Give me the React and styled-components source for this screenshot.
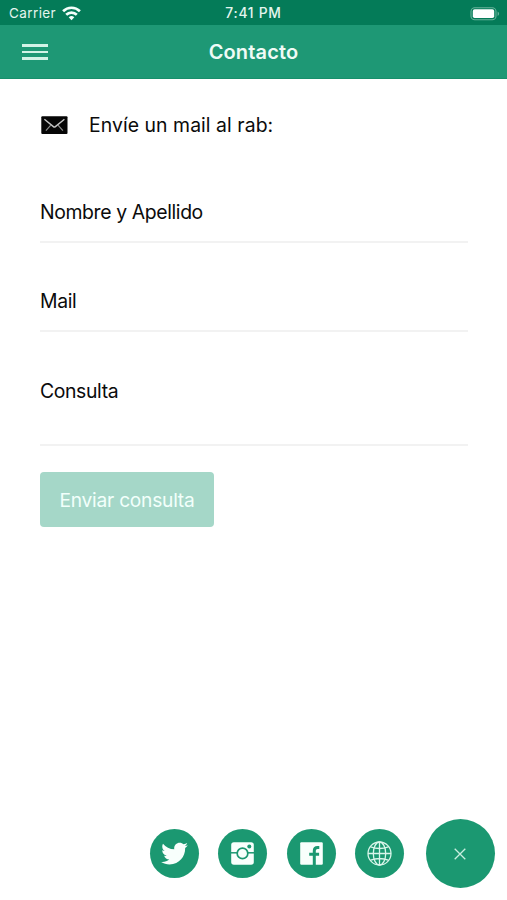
import React from 'react'
import styled, { createGlobalStyle } from 'styled-components'

import { IoLogoTwitter } from 'react-icons/io'

const GlobalStyle = createGlobalStyle`
  * {
    box-sizing: border-box;
  }
  body {
    margin: 0;
    background: #fff;
    color: #0b0b0b;
    font-family: Inter, "Liberation Sans", sans-serif;
  }
`;

const Screen = styled.div`
  display: flex;
  flex-direction: column;
  height: 900px;
  overflow: hidden;
`;

const StatusBar = styled.div`
  display: grid;
  grid-template-columns: 1fr auto 1fr;
  align-items: center;
  height: 25px;
  padding: 2px 7px 0;
  background: #047b58;
  color: #e4f5ee;
  font-size: 13.5px;
  line-height: 23px;
`;

const Carrier = styled.div`
  display: flex;
  align-items: center;
  gap: 5.5px;
  padding-left: 2px;
  letter-spacing: 0.4px;
`;

const Time = styled.div`
  font-weight: 500;
  font-size: 13.8px;
  letter-spacing: 0.75px;
`;

const Battery = styled.svg`
  justify-self: end;
`;

const Header = styled.header`
  display: grid;
  grid-template-columns: 1fr auto 1fr;
  align-items: center;
  height: 54px;
  padding: 0 22px;
  background: #1e9875;
  border-bottom: 1px solid #178f6b;
`;

const MenuButton = styled.button`
  display: flex;
  flex-direction: column;
  gap: 4px;
  width: 26px;
  padding: 1px 0 0;
  border: 0;
  background: none;
  cursor: pointer;
`;

const MenuLine = styled.span`
  height: 2.4px;
  background: #d3f3e7;
`;

const Title = styled.h1`
  margin: 0;
  color: #effbf6;
  font-size: 20px;
  font-weight: 600;
  line-height: 24px;
  letter-spacing: 0.15px;
`;

const Form = styled.form`
  flex: 1;
  display: flex;
  flex-direction: column;
  align-items: flex-start;
  padding: 32px 39px 0 40px;
`;

const Intro = styled.div`
  display: flex;
  align-items: center;
  gap: 21px;
  height: 28px;
  margin-bottom: 47px;
  padding-left: 1px;
  font-size: 19.4px;
  letter-spacing: 0.06px;
`;

const Field = styled.label`
  width: 100%;
  height: ${props => props.$height}px;
  margin-bottom: ${props => props.$gap}px;
  padding-top: ${props => props.$top}px;
  border-bottom: 2px solid #f2f2f2;
  font-size: 19.4px;
  line-height: 28px;
  letter-spacing: -0.38px;
`;

const Submit = styled.button`
  width: 174px;
  height: 55px;
  padding: 1px 0 0;
  border: 0;
  border-radius: 4px;
  background: #a5d7c8;
  color: #f2fffb;
  font-family: inherit;
  font-size: 19.2px;
  letter-spacing: -0.25px;
`;

const Social = styled.div`
  display: flex;
  align-items: center;
  justify-content: flex-end;
  gap: 19.5px;
  padding: 0 12.5px 12px 0;
`;

const Circle = styled.button`
  display: flex;
  align-items: center;
  justify-content: center;
  flex: none;
  width: ${props => props.$size}px;
  height: ${props => props.$size}px;
  margin-left: ${props => props.$offset || 0}px;
  padding: 0;
  border: 0;
  border-radius: 50%;
  background: #1b9871;
  color: #f8fffc;
  cursor: pointer;
`;


const WifiIcon = () => (
  <svg width="19" height="15" viewBox="0 0 19 15" fill="none" stroke="#f4fffb" strokeWidth="2.7">
    <path d="M1.1 5.2a12 12 0 0 1 16.8 0" />
    <path d="M4.2 8.7a7.6 7.6 0 0 1 10.6 0" />
    <path d="M9.5 14.2l-2.8-2.9a4 4 0 0 1 5.6 0z" fill="#f4fffb" stroke="none" />
  </svg>
)

const BatteryIcon = () => (
  <Battery width="31" height="14" viewBox="0 0 31 14" fill="none">
    <rect x="2" y="0.7" width="25" height="12" rx="3.8" stroke="#69b39b" strokeWidth="1.1" />
    <rect x="3.8" y="2.3" width="21.4" height="8.8" rx="1.8" fill="#fff" />
    <path d="M28.6 4.5c2 .8 2 3.6 0 4.4z" fill="#69b39b" />
  </Battery>
)

const MailIcon = () => (
  <svg width="27" height="19" viewBox="0 0 27 19" fill="none">
    <rect x="0.3" y="0.2" width="26.2" height="17.8" rx="1" fill="#060606" />
    <path d="M3.4 3.2l9 7.4q1 .8 2 0l9-7.4" stroke="#c4c4c4" strokeWidth="1.4" />
    <path d="M4.9 14.6l4.9-5.4M21.9 14.6l-4.9-5.4" stroke="#8c8c8c" strokeWidth="1.2" />
  </svg>
)

const InstagramIcon = () => (
  <svg width="23" height="23" viewBox="0 0 23 23">
    <rect x="0.2" y="0.2" width="22.6" height="22.6" rx="2.7" fill="#f8fffc" />
    <path d="M0 10.8h23" stroke="#1b9871" strokeWidth="1.5" />
    <circle cx="11.5" cy="11.4" r="5.3" fill="#f8fffc" stroke="#1b9871" strokeWidth="1.7" />
    <circle cx="18.3" cy="4.6" r="2" fill="#1b9871" />
  </svg>
)

const FacebookIcon = () => (
  <svg width="23" height="23" viewBox="0 0 23 23" fill="none">
    <rect x="0.2" y="0.2" width="22.6" height="22.6" rx="1.2" fill="#f8fffc" />
    <path d="M14.3 23V8.8q0-3.2 3.2-3.2h1.8M9.2 12.2h9.9" stroke="#1b9871" strokeWidth="3" />
  </svg>
)

const GlobeIcon = () => (
  <svg width="25" height="25" viewBox="0 0 25 25" fill="none" stroke="#d9f5ea" strokeWidth="1.3">
    <circle cx="12.5" cy="12.5" r="11.5" />
    <ellipse cx="12.5" cy="12.5" rx="6.2" ry="11.5" />
    <path d="M12.5 1v23M1 12.5h23M3.6 5.8q8.9 3.4 17.8 0M3.6 19.2q8.9-3.4 17.8 0" />
  </svg>
)

const CloseIcon = () => (
  <svg width="12" height="12" viewBox="0 0 12 12" stroke="#c9eee0" strokeWidth="1.3">
    <path d="M.7.7l10.6 10.6M11.3.7L.7 11.3" />
  </svg>
)


const App = () => {
  return (
    <Screen>
      <GlobalStyle />
      <StatusBar>
        <Carrier>Carrier <WifiIcon /></Carrier>
        <Time>7:41 PM</Time>
        <BatteryIcon />
      </StatusBar>
      <Header>
        <MenuButton type="button" aria-label="Menú">
          <MenuLine />
          <MenuLine />
          <MenuLine />
        </MenuButton>
        <Title>Contacto</Title>
      </Header>
      <Form>
        <Intro><MailIcon /> Envíe un mail al rab:</Intro>
        <Field $height={57} $gap={33} $top={12}>Nombre y Apellido</Field>
        <Field $height={56} $gap={34} $top={11}>Mail</Field>
        <Field $height={80} $gap={26} $top={11}>Consulta</Field>
        <Submit type="button">Enviar consulta</Submit>
      </Form>
      <Social>
        <Circle type="button" $size={49} aria-label="Twitter"><IoLogoTwitter size={29} /></Circle>
        <Circle type="button" $size={49} aria-label="Instagram"><InstagramIcon /></Circle>
        <Circle type="button" $size={49} aria-label="Facebook"><FacebookIcon /></Circle>
        <Circle type="button" $size={49} aria-label="Web"><GlobeIcon /></Circle>
        <Circle type="button" $size={69} $offset={2} aria-label="Cerrar"><CloseIcon /></Circle>
      </Social>
    </Screen>
  )
}

export default App
